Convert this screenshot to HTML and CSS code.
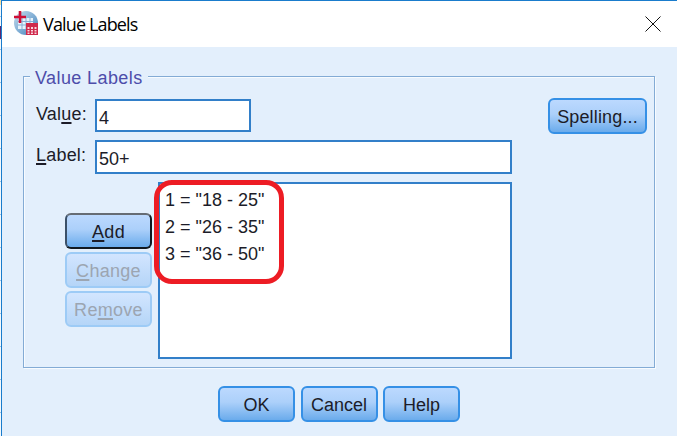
FILE: index.html
```html
<!DOCTYPE html>
<html lang="en">
<head>
<meta charset="utf-8">
<title>Value Labels</title>
<link rel="stylesheet" href="styles.css">
</head>
<body>
<div class="backdrop"></div>
<main class="dialog">
  <header class="titlebar">
    <svg class="app-icon" width="24" height="24" viewBox="0 0 24 24">
      <defs><linearGradient id="globe" x2="1" y2="1"><stop stop-color="#c9dced"/><stop offset=".5" stop-color="#83b0d6"/><stop offset="1" stop-color="#3d7db5"/></linearGradient></defs>
      <circle cx="12" cy="12" r="12" fill="url(#globe)"/>
      <path d="M4 7h15v11H4z" fill="#e7f2fb"/>
      <path d="M4 10.500h15M4 14h15M8 7v11M12 7v11M16 7v11" stroke="#86afd6" fill="none"/>
      <path d="M6 0v12M0 6h12" stroke="#cf0d35" stroke-width="2.600"/>
      <path d="M12 12h12v12H12z" fill="#cf294b"/>
      <path d="M13.500 16h2v2h-2zM17 16h2v2h-2zM20.500 16h2v2h-2zM13.500 19h2v1.500h-2zM17 19h2v1.500h-2zM20.500 19h2v1.500h-2zM13.500 21.500h2v1.500h-2zM17 21.500h2v1.500h-2zM20.500 21.500h2v1.500h-2z" fill="#f8d4dc"/>
    </svg>
    <h1>Value Labels</h1>
    <svg class="close" width="16" height="16" viewBox="0 0 16 16"><path d="M.5.5l15 15M15.500.5l-15 15" stroke="#111" stroke-width="1"/></svg>
  </header>
  <section class="group">
    <h2><span>Value Labels</span></h2>
    <div class="fields">
      <label>Val<u>u</u>e:</label><div class="field short"><span>4</span></div>
      <button class="spelling"><span>Spelling...</span></button>
      <label><u>L</u>abel:</label><div class="field"><span>50+</span></div>
    </div>
    <div class="values">
      <div class="actions">
        <button class="focused"><span><u>A</u>dd</span></button>
        <button class="disabled"><span><u>C</u>hange</span></button>
        <button class="disabled"><span>Re<u>m</u>ove</span></button>
      </div>
      <div class="list">
        <div><span>1 = "18 - 25"</span></div>
        <div><span>2 = "26 - 35"</span></div>
        <div><span>3 = "36 - 50"</span></div>
        <i class="marker"></i>
      </div>
    </div>
  </section>
  <footer>
    <button><span>OK</span></button>
    <button><span>Cancel</span></button>
    <button><span>Help</span></button>
  </footer>
</main>
</body>
</html>
```

FILE: styles.css
```css
* { box-sizing: border-box; }
body { margin: 0; display: flex; width: 677px; height: 436px; overflow: hidden; font: 18px/20px "Liberation Sans", Arial, sans-serif; color: #1c1c28; background: #fff; }
.backdrop { width: 1px; background: linear-gradient(#f5dfa0 0 5px, transparent 5px 26px, #5b2a72 26px 39px, transparent 39px), repeating-linear-gradient(#f4f9fd 0 16px, #9cc3e6 16px 17px, #f4f9fd 17px 33px); }
.dialog { width: 676px; border-top: 1px solid #1a7ccc; border-left: 1px solid #1a7ccc; background: #e3effc; }
.titlebar { height: 46px; display: flex; align-items: center; background: #fff; padding: 0 16px 0 12px; }
.app-icon { margin-top: -2px; }
h1 { flex: 1; margin: 0 0 0 5px; font: 18px/24px "Open Sans", sans-serif; letter-spacing: -.85px; color: #000; }
.group { position: relative; margin: 29px 0 0 21px; width: 632px; height: 292px; border: 1px solid #83abd5; box-shadow: 1px 1px #f7fbff, inset 1px 1px #f7fbff; padding: 22px 7px 0 12px; }
h2 { position: absolute; top: -11px; left: 6px; margin: 0; padding: 0 6px 0 5px; width: 118px; background: #e3effc; font: inherit; line-height: 24px; color: #4d4daa; white-space: nowrap; letter-spacing: .4px; }
.fields { display: grid; grid-template-columns: 59px 417px 1fr; grid-template-rows: 33px 34px; row-gap: 8px; }
label { padding-top: 5px; white-space: nowrap; letter-spacing: .2px; }
u { text-decoration-thickness: 1.5px; text-underline-offset: 2px; }
.field { height: 34px; border: 2px solid #327fc9; background: #fff; padding: 7px 0 0 2px; }
.short { width: 156px; height: 33px; }
button { width: 77px; height: 36px; padding: 1px 0 0; border: 2px solid #3590e6; border-radius: 6px; background: linear-gradient(#bedaff, #acd0fa 45%, #63a7ea); background-origin: border-box; font: inherit; color: #1c1c28; white-space: nowrap; }
.spelling { width: 99px; justify-self: end; margin-top: -1px; letter-spacing: .15px; }
.values { display: flex; margin: 8px 0 0 29px; }
.actions { display: flex; flex-direction: column; gap: 3px; padding: 31px 6px 0 0; }
.actions button { width: 87px; letter-spacing: .3px; }
.actions .focused { border-color: #666c74 #101820 #101820 #3b5068; }
.disabled { border-color: #9dcbf6; background: linear-gradient(#d4e6ff, #b3d4f7); background-origin: border-box; color: #9ca5b1; }
.list { position: relative; width: 354px; height: 177px; border: 2px solid #327fc9; background: #fff; padding: 3px 0 0 5px; line-height: 27px; }
.marker { position: absolute; left: -6px; top: -4px; width: 130px; height: 104px; border: 5px solid #ed1c24; border-radius: 18px; }
footer { display: flex; gap: 5.500px; margin: 18px 0 0 216px; }
```
